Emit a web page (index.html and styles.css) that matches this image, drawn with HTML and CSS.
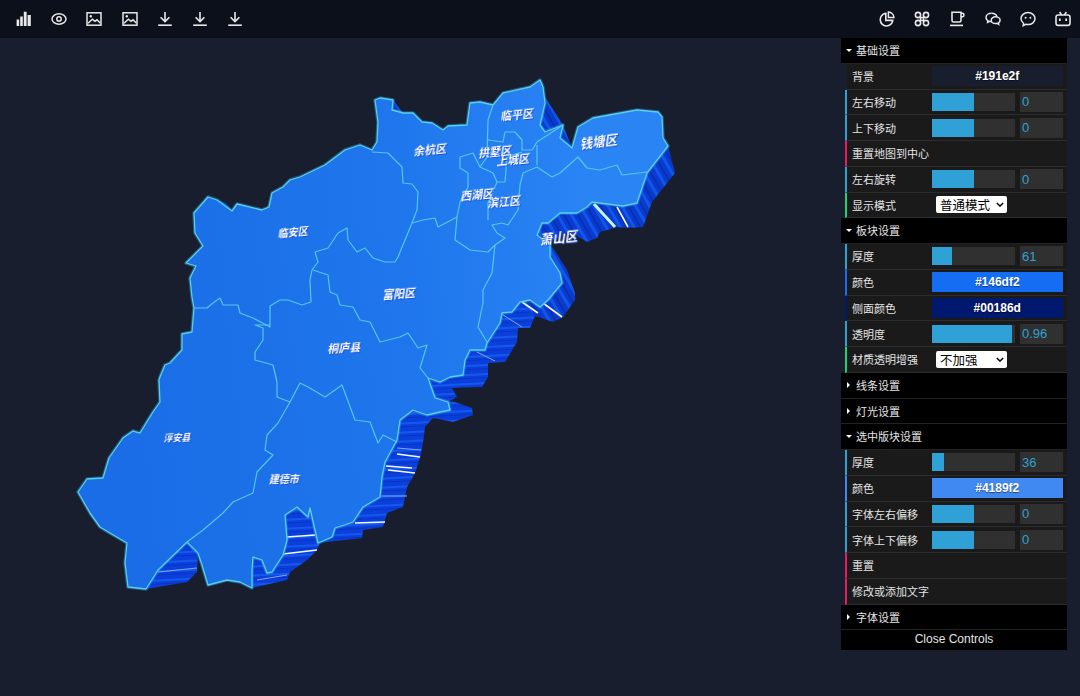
FILE: index.html
```html
<!DOCTYPE html>
<html lang="en">
<head>
    <meta charset="UTF-8">
    <meta name="viewport" content="width=device-width, initial-scale=1.0">
    <title>3D Map Editor</title>
    <link rel="stylesheet" href="styles.css">
</head>
<body>

<svg class="icon-defs" width="0" height="0">
    <symbol id="i-image" viewBox="0 0 16 16">
        <rect x="1" y="1.8" width="14" height="12.4" fill="none" stroke="currentColor" stroke-width="1.5"/>
        <circle cx="4.8" cy="5.2" r="1.2" fill="currentColor"/>
        <path d="M2 12.2l4.4-4 2.6 2.2 2-1.6 3.2 3.2" fill="none" stroke="currentColor" stroke-width="1.5"/>
    </symbol>
    <symbol id="i-down" viewBox="0 0 16 16">
        <path d="M8 1v9.2M3.6 6.2L8 10.6l4.4-4.4" fill="none" stroke="currentColor" stroke-width="1.6"/>
        <path d="M1.2 14.2h13.6" fill="none" stroke="currentColor" stroke-width="1.6"/>
    </symbol>
</svg>

<header class="topbar">
    <div class="tools">
        <svg class="tool" viewBox="0 0 16 16"><path d="M.6 8.5h2.6V15H.6zM4.2 5.5h2.6V15H4.2zM7.8 .8h2.8V15H7.8zM11.6 4h3.2V15h-3.2z" fill="currentColor"/></svg>
        <svg class="tool" viewBox="0 0 16 16"><ellipse cx="8" cy="8" rx="7" ry="5.2" fill="none" stroke="currentColor" stroke-width="1.5"/><circle cx="8" cy="8" r="2.2" fill="none" stroke="currentColor" stroke-width="1.5"/></svg>
        <svg class="tool"><use href="#i-image"/></svg>
        <svg class="tool"><use href="#i-image"/></svg>
        <svg class="tool"><use href="#i-down"/></svg>
        <svg class="tool"><use href="#i-down"/></svg>
        <svg class="tool"><use href="#i-down"/></svg>
    </div>
    <div class="tools">
        <svg class="tool" viewBox="0 0 16 16"><path d="M6.8 2.4a6.3 6.3 0 1 0 7 7H6.8z" fill="none" stroke="currentColor" stroke-width="1.6"/><path d="M9.4 .9a6 6 0 0 1 5.6 5.7H9.4z" fill="none" stroke="currentColor" stroke-width="1.5"/></svg>
        <svg class="tool" viewBox="0 0 16 16"><g fill="none" stroke="currentColor" stroke-width="1.6"><circle cx="4" cy="4" r="2.6"/><circle cx="12" cy="4" r="2.6"/><circle cx="4" cy="12" r="2.6"/><circle cx="12" cy="12" r="2.6"/><path d="M6.5 6.5h3v3h-3z"/></g></svg>
        <svg class="tool" viewBox="0 0 16 16"><g fill="none" stroke="currentColor" stroke-width="1.6"><path d="M3 1.2h9v8.2a1.6 1.6 0 0 1-1.6 1.6H4.6A1.6 1.6 0 0 1 3 9.4z"/><path d="M12 2.2h1.4a1.5 1.5 0 0 1 1.5 1.5v.6a1.5 1.5 0 0 1-1.5 1.5H12"/><path d="M1 14.4h13"/></g></svg>
        <svg class="tool" viewBox="0 0 16 16"><g fill="none" stroke="currentColor" stroke-width="1.5"><path d="M6.6 2.2c-3 0-5.6 1.8-5.6 4.2 0 1.3.7 2.4 1.9 3.2l-.3 1.7 2-1c.7.2 1.3.3 2 .3"/><path d="M6.6 2.2c2.6 0 4.7 1.3 5.3 3.2"/><path d="M10.6 5.8c-2.5 0-4.4 1.5-4.4 3.4s1.9 3.4 4.4 3.4c.5 0 1-.1 1.5-.2l1.6.9-.2-1.5c1-.7 1.6-1.6 1.6-2.6 0-1.9-2-3.4-4.5-3.4z"/></g></svg>
        <svg class="tool" viewBox="0 0 16 16"><path d="M8 1.6c-3.9 0-7 2.7-7 6 0 1.900 1 3.600 2.600 4.700l-.4 2.300 2.700-1.300c.7.200 1.400.3 2.100.3 3.900 0 7-2.700 7-6s-3.100-6-7-6z" fill="none" stroke="currentColor" stroke-width="1.500"/><circle cx="5.600" cy="6.800" r="1" fill="currentColor"/><circle cx="10.400" cy="6.800" r="1" fill="currentColor"/></svg>
        <svg class="tool" viewBox="0 0 16 16"><g fill="none" stroke="currentColor" stroke-width="1.600"><rect x="1" y="4" width="14" height="10.400" rx="2.200"/><path d="M4.600 1l2 3M11.400 1l-2 3"/></g><path d="M4.800 7.400v2.600M11.200 7.400v2.600" stroke="currentColor" stroke-width="1.800"/></svg>
    </div>
</header>

<main class="stage">
    <svg class="map" width="1080" height="658" viewBox="0 38 1080 658">
        <defs>
            <linearGradient id="top-fill" gradientUnits="userSpaceOnUse" x1="120" y1="330" x2="600" y2="280">
                <stop offset="0" stop-color="#1a6de6"/>
                <stop offset="0.55" stop-color="#1e75ec"/>
                <stop offset="1" stop-color="#2a84f4"/>
            </linearGradient>
            <pattern id="wall-flat" width="40" height="9" patternUnits="userSpaceOnUse" patternTransform="rotate(-3)">
                <rect width="40" height="9" fill="#0b3fdc"/>
                <rect y="2" width="40" height="2" fill="#1458ec"/>
                <rect y="6" width="40" height="1" fill="#0a33c4"/>
            </pattern>
            <pattern id="wall-steep" width="12" height="40" patternUnits="userSpaceOnUse" patternTransform="rotate(-30)">
                <rect width="12" height="40" fill="#0a3bd0"/>
                <rect x="2" width="3" height="40" fill="#1256e8"/>
                <rect x="8" width="2" height="40" fill="#0830b0"/>
            </pattern>
        </defs>

        <!-- side walls -->
        <g class="walls">
            <path class="wall-flat" d="M187 542L158 570 146 589 187 582 197 572 198 553z"/>
            <path class="wall-flat" d="M252 570V588L287 580 290 572 307 560 317 550 320 543 310 508 308 517 297 507 285 515 287 540 283 555 272 572 267 573 262 560 253 557z"/>
            <path class="wall-flat" d="M318 543L362 538 363 530 383 527 387 513 403 507 407 487 415 473 420 458 423 443 425 427 433 418 453 422 473 415 472 408 455 402 440 400 435 398 450 410 440 412 427 415 413 410 400 420 397 440 385 462 382 477 380 497 363 507 353 522 335 528 332 537z"/>
            <path class="wall-flat" d="M428 378L440 382 450 377 463 375 465 360 470 350 485 350 487 343 500 323 502 313 512 312 520 302 535 316 530 328 518 328 517 342 505 362 488 363 488 377 482 387 452 388 457 397 448 402 435 398z"/>
            <path class="wall-steep" d="M520 302L530 300 540 307 548 300 560 283 562 283 550 257 550 245 553 248 567 270 575 293 575 300 563 317 553 322 535 316z"/>
            <path class="wall-steep" d="M537 235L542 223 548 223 560 213 577 213 587 207 592 202 623 206 637 203 647 173 668 146 675 173 652 202 643 227 627 228 617 227 600 232 597 238 587 242 570 232 553 240z"/>
            <path class="wall-steep" d="M545 97L563 125 545 132 540 125 545 103zM563 125L572 148 560 138zM393 100L403 113 392 110zM217 200L232 211 226 203zM360 145L372 150 362 158z"/>
        </g>
        <g class="wall-lights">
            <path d="M386 466L412 468M388 470L415 473M397 454L420 457M355 523L385 522M287 537L315 535M283 554L317 550"/>
            <path class="soft" d="M397 448L421 450M382 496L407 496M158 572L197 568M257 580L287 575M477 352L495 361M500 313L522 327"/>
            <path d="M522 302L538 313M543 303L562 317M617 207L628 227"/>
            <path class="cyan" d="M594 204L615 227"/>
        </g>

        <!-- top surface -->
        <path class="surface-glow" id="outline" d="M78 492L87 479 103 478 109 458 123 438 133 431 140 433 153 412 160 402 159 380 160 377 165 365 170 363 182 350 182 334 192 332 194 308 192 297 190 278 196 266 186 263 203 246 195 233 194 213 208 197 217 200 232 211 237 204 262 210 269 207 272 193 283 187 290 180 300 177 325 165 345 150 360 145 372 150 377 142 378 122 375 100 380 98 393 100 392 110 403 113 413 113 422 122 432 123 443 130 448 126 467 125 470 103 480 102 493 105 503 93 530 87 540 80 543 87 545 103 540 125 545 132 563 125 560 138 572 148 578 127 593 118 637 110 658 112 662 117 663 138 668 146 647 173 637 203 623 206 592 202 587 207 577 213 560 213 548 223 542 223 537 235 550 245 550 257 560 273 562 283 548 300 540 307 530 300 520 302 512 312 502 313 500 323 487 343 485 350 470 350 465 360 463 375 450 377 440 382 428 378 435 398 448 402 450 410 440 412 427 415 413 410 400 420 397 440 385 462 382 477 380 497 363 507 353 522 335 528 332 537 318 543 310 508 308 517 297 507 285 515 287 540 283 555 272 572 267 573 262 560 253 557 252 570 252 588 240 582 227 580 208 585 202 565 198 553 187 542 158 570 146 589 128 587 125 563 127 543 110 533 100 527 90 513z"/>
        <path class="surface" d="M78 492L87 479 103 478 109 458 123 438 133 431 140 433 153 412 160 402 159 380 160 377 165 365 170 363 182 350 182 334 192 332 194 308 192 297 190 278 196 266 186 263 203 246 195 233 194 213 208 197 217 200 232 211 237 204 262 210 269 207 272 193 283 187 290 180 300 177 325 165 345 150 360 145 372 150 377 142 378 122 375 100 380 98 393 100 392 110 403 113 413 113 422 122 432 123 443 130 448 126 467 125 470 103 480 102 493 105 503 93 530 87 540 80 543 87 545 103 540 125 545 132 563 125 560 138 572 148 578 127 593 118 637 110 658 112 662 117 663 138 668 146 647 173 637 203 623 206 592 202 587 207 577 213 560 213 548 223 542 223 537 235 550 245 550 257 560 273 562 283 548 300 540 307 530 300 520 302 512 312 502 313 500 323 487 343 485 350 470 350 465 360 463 375 450 377 440 382 428 378 435 398 448 402 450 410 440 412 427 415 413 410 400 420 397 440 385 462 382 477 380 497 363 507 353 522 335 528 332 537 318 543 310 508 308 517 297 507 285 515 287 540 283 555 272 572 267 573 262 560 253 557 252 570 252 588 240 582 227 580 208 585 202 565 198 553 187 542 158 570 146 589 128 587 125 563 127 543 110 533 100 527 90 513z"/>

        <!-- district borders -->
        <g class="borders">
            <path d="M372 152L388 153 402 167 403 183 412 184 418 192 417 210 412 223 398 257 395 262 385 262 373 258 365 248 357 252 348 240 347 228 338 233 328 248 315 252 318 262 312 270 310 280 311 302 302 305 288 300 280 300 270 306 270 327 253 318 240 313 238 305 223 305 220 298 213 303 207 308 195 308"/>
            <path d="M412 223L423 220 435 218 438 227 457 217 455 240 470 250 488 252 495 245 505 238 497 233 492 225 502 223 508 225 518 210 520 185 523 173 537 167 552 177 560 173 578 157 587 168 600 170 617 165 622 175 647 172"/>
            <path d="M270 325L255 325 263 328 263 340 255 352 255 360 273 365 277 382 277 397 290 402 300 383 308 387 325 397 342 385 355 420 370 422 378 443 383 435 397 442"/>
            <path d="M290 402L278 423 267 435 265 450 273 455 257 472 253 493 233 502 223 513 203 530 187 542"/>
            <path d="M313 270L328 275 330 292 337 295 340 305 353 307 360 320 370 322 380 342 400 337 408 333 418 348 427 345 420 368 428 378"/>
            <path d="M495 245L492 273 483 290 483 303 478 327 487 342"/>
            <path d="M457 217L460 202 468 187 468 173 460 168 460 157 473 153 480 167 493 173 497 182 488 203 488 220"/>
            <path d="M493 105L488 120 487 157 480 167M488 140L503 142 505 132 515 132 522 140 522 150 532 150 537 142 563 125M537 145V165"/>
            <path d="M497 182H505L507 157 522 152"/>
        </g>

        <!-- district names -->
        <g class="labels">
            <text class="name name-m" transform="translate(517 119) rotate(-6) skewX(-14)">临平区</text>
            <text class="name name-l" transform="translate(599 146) rotate(-7) skewX(-14)">钱塘区</text>
            <text class="name name-m" transform="translate(430 154) rotate(-6) skewX(-14)">余杭区</text>
            <text class="name name-m" transform="translate(495 156) rotate(-6) skewX(-14)">拱墅区</text>
            <text class="name name-m" transform="translate(513 164) rotate(-6) skewX(-14)">上城区</text>
            <text class="name name-m" transform="translate(477 199) rotate(-6) skewX(-14)">西湖区</text>
            <text class="name name-m" transform="translate(504 206) rotate(-6) skewX(-14)">滨江区</text>
            <text class="name name-l" transform="translate(559 242) rotate(-6) skewX(-14)">萧山区</text>
            <text class="name name-m" transform="translate(399 298) rotate(-5) skewX(-14)">富阳区</text>
            <text class="name name-m" transform="translate(344 352) rotate(-4) skewX(-14)">桐庐县</text>
            <text class="name name-s" transform="translate(293 236) rotate(-5) skewX(-14)">临安区</text>
            <text class="name name-xs" transform="translate(177 441) rotate(-2) skewX(-14)">淳安县</text>
            <text class="name name-s" transform="translate(284 483) rotate(-1) skewX(-12)">建德市</text>
        </g>
    </svg>

    <aside class="gui">
        <div class="folder-title open">基础设置</div>
        <div class="row" style="border-left-color: #191e2f">
            <span class="row-label">背景</span>
            <div class="swatch" style="background-color: #191e2f">#191e2f</div>
        </div>
        <div class="row row-number">
            <span class="row-label">左右移动</span>
            <div class="slider"><div class="slider-fg" style="width: 50%"></div></div>
            <input class="number" type="text" value="0">
        </div>
        <div class="row row-number">
            <span class="row-label">上下移动</span>
            <div class="slider"><div class="slider-fg" style="width: 50%"></div></div>
            <input class="number" type="text" value="0">
        </div>
        <div class="row row-action"><span class="row-label wide">重置地图到中心</span></div>
        <div class="row row-number">
            <span class="row-label">左右旋转</span>
            <div class="slider"><div class="slider-fg" style="width: 50%"></div></div>
            <input class="number" type="text" value="0">
        </div>
        <div class="row row-option">
            <span class="row-label">显示模式</span>
            <div class="select-wrap">
                <select class="select"><option>普通模式</option></select>
                <svg class="chevron" viewBox="0 0 10 6"><path d="M1 1l4 4 4-4" fill="none" stroke="#000" stroke-width="1.800"/></svg>
            </div>
        </div>

        <div class="folder-title open">板块设置</div>
        <div class="row row-number">
            <span class="row-label">厚度</span>
            <div class="slider"><div class="slider-fg" style="width: 24%"></div></div>
            <input class="number" type="text" value="61">
        </div>
        <div class="row" style="border-left-color: #146df2">
            <span class="row-label">颜色</span>
            <div class="swatch" style="background-color: #146df2">#146df2</div>
        </div>
        <div class="row" style="border-left-color: #00186d">
            <span class="row-label">侧面颜色</span>
            <div class="swatch" style="background-color: #00186d">#00186d</div>
        </div>
        <div class="row row-number">
            <span class="row-label">透明度</span>
            <div class="slider"><div class="slider-fg" style="width: 96%"></div></div>
            <input class="number" type="text" value="0.96">
        </div>
        <div class="row row-option">
            <span class="row-label">材质透明增强</span>
            <div class="select-wrap">
                <select class="select"><option>不加强</option></select>
                <svg class="chevron" viewBox="0 0 10 6"><path d="M1 1l4 4 4-4" fill="none" stroke="#000" stroke-width="1.800"/></svg>
            </div>
        </div>

        <div class="folder-title">线条设置</div>
        <div class="folder-title">灯光设置</div>

        <div class="folder-title open">选中版块设置</div>
        <div class="row row-number">
            <span class="row-label">厚度</span>
            <div class="slider"><div class="slider-fg" style="width: 14.500%"></div></div>
            <input class="number" type="text" value="36">
        </div>
        <div class="row" style="border-left-color: #4189f2">
            <span class="row-label">颜色</span>
            <div class="swatch" style="background-color: #4189f2">#4189f2</div>
        </div>
        <div class="row row-number">
            <span class="row-label">字体左右偏移</span>
            <div class="slider"><div class="slider-fg" style="width: 50%"></div></div>
            <input class="number" type="text" value="0">
        </div>
        <div class="row row-number">
            <span class="row-label">字体上下偏移</span>
            <div class="slider"><div class="slider-fg" style="width: 50%"></div></div>
            <input class="number" type="text" value="0">
        </div>
        <div class="row row-action"><span class="row-label wide">重置</span></div>
        <div class="row row-action"><span class="row-label wide">修改或添加文字</span></div>

        <div class="folder-title">字体设置</div>
        <div class="close-button">Close Controls</div>
    </aside>
</main>

</body>
</html>
```

FILE: styles.css
```css
body {
    margin: 0;
    height: 696px;
    overflow: hidden;
    background-color: #191e2f;
    font-family: "Liberation Sans", "Noto Sans CJK SC", sans-serif;
    display: flex;
    flex-direction: column;
}

.icon-defs {
    position: absolute;
}

.topbar {
    flex: 0 0 38px;
    background-color: #0c101b;
    color: #e8e8e8;
    display: flex;
    justify-content: space-between;
    align-items: center;
    padding: 0 9px 0 16px;
}

.tools {
    display: flex;
    gap: 19.200px;
}

.tool {
    width: 16px;
    height: 16px;
    display: block;
}

.stage {
    position: relative;
    flex: 1;
}

.map {
    display: block;
}

/* map */
.wall-flat {
    fill: url(#wall-flat);
}

.wall-steep {
    fill: url(#wall-steep);
}

.wall-lights path {
    fill: none;
    stroke: #f4f8ff;
    stroke-width: 1.600;
}

.wall-lights .soft {
    stroke: #7fa8f5;
    stroke-width: 1;
}

.wall-lights .cyan {
    stroke: #c4f4f4;
    stroke-width: 3;
}

.surface {
    fill: url(#top-fill);
    stroke: #58cfe6;
    stroke-width: 1.300;
    stroke-linejoin: round;
}

.surface-glow {
    fill: none;
    stroke: #2f9fe0;
    stroke-opacity: 0.45;
    stroke-width: 3.500;
    stroke-linejoin: round;
}

.borders path {
    fill: none;
    stroke: #55c6ea;
    stroke-width: 1.200;
    stroke-linejoin: round;
}

.name {
    fill: #fff;
    font-family: "Noto Sans CJK SC", sans-serif;
    font-weight: 700;
    text-anchor: middle;
    filter: drop-shadow(1px 1px 0 #1a4fd0);
}

.name-l { font-size: 12.500px; }
.name-m { font-size: 11px; }
.name-s { font-size: 10px; }
.name-xs { font-size: 9px; }

/* control panel */
.gui {
    position: absolute;
    top: 0;
    right: 13px;
    width: 226px;
    font-family: "Noto Sans CJK SC", "Liberation Sans", sans-serif;
    font-size: 11px;
    color: #e4e4e4;
}

.folder-title {
    box-sizing: border-box;
    height: 25.760px;
    line-height: 24px;
    padding-left: 15px;
    background-color: #000;
    border-bottom: 1px solid #222;
    position: relative;
}

.folder-title::before {
    content: "";
    position: absolute;
    left: 6px;
    top: 9px;
    border-style: solid;
    border-width: 3px 0 3px 3px;
    border-color: transparent transparent transparent #fff;
}

.folder-title.open::before {
    left: 5px;
    top: 11px;
    border-width: 3px 3px 0 3px;
    border-color: #fff transparent transparent transparent;
}

.row {
    box-sizing: border-box;
    height: 25.760px;
    margin-left: 4px;
    padding: 0 4px 0 5px;
    background-color: #1a1a1a;
    border-left: 2.500px solid #2fa1d6;
    border-bottom: 1px solid #2c2c2c;
    display: flex;
    align-items: center;
}

.row-action {
    border-left-color: #e61d5f;
}

.row-option {
    border-left-color: #1ed36f;
}

.row-label {
    flex: 0 0 79.500px;
    white-space: nowrap;
}

.slider {
    width: 83px;
    height: 18px;
    background-color: #303030;
    margin-left: 0.500px;
}

.slider-fg {
    height: 100%;
    background-color: #2fa1d6;
}

.number {
    box-sizing: border-box;
    width: 43px;
    height: 20px;
    margin: 0 0 0 5px;
    padding: 0 2px;
    border: none;
    background-color: #303030;
    color: #2fa1d6;
    font-family: "Liberation Sans", sans-serif;
    font-size: 13px;
}

.swatch {
    flex: 1;
    height: 20.500px;
    line-height: 20.500px;
    text-align: center;
    color: #fff;
    font-family: "Liberation Sans", sans-serif;
    font-size: 12px;
    font-weight: 700;
    text-shadow: 0 1px 1px rgba(0, 0, 0, 0.5);
}

.select-wrap {
    position: relative;
    margin-left: 4.500px;
    width: 71px;
    height: 17px;
}

.select {
    display: block;
    appearance: none;
    box-sizing: border-box;
    width: 100%;
    height: 100%;
    margin: 0;
    padding: 0 0 0 4px;
    border: none;
    border-radius: 2px;
    background-color: #fff;
    color: #000;
    font-family: "Noto Sans CJK SC", sans-serif;
    font-size: 12.500px;
    line-height: 17px;
}

.chevron {
    position: absolute;
    right: 3px;
    top: 6px;
    width: 8px;
    height: 5px;
}

.close-button {
    height: 19.500px;
    line-height: 19px;
    text-align: center;
    background-color: #000;
    font-family: "Liberation Sans", sans-serif;
    font-size: 12px;
}
```
